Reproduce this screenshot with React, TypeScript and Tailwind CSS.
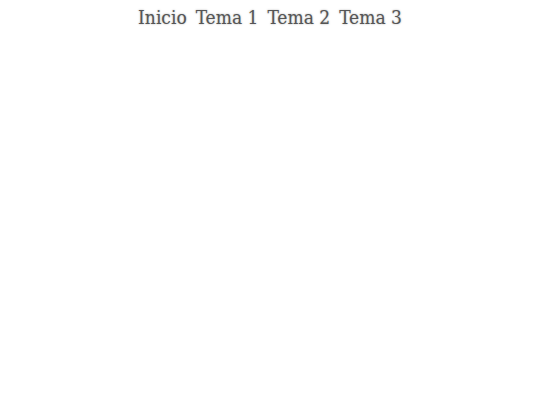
export default function App() {
  const items = ["Inicio", "Tema 1", "Tema 2", "Tema 3"];
  return (
    <div className="w-[540px] h-[405px] bg-white">
      <nav className="flex justify-center gap-[9px] pt-[3px]">
        {items.map((t) => (
          <a
            key={t}
            href="#"
            className="text-[19px] text-[#555] [font-stretch:condensed] [text-shadow:0_0_2px_#aaa]"
            style={{ fontFamily: '"DejaVu Serif", serif' }}
          >
            {t}
          </a>
        ))}
      </nav>
    </div>
  );
}
